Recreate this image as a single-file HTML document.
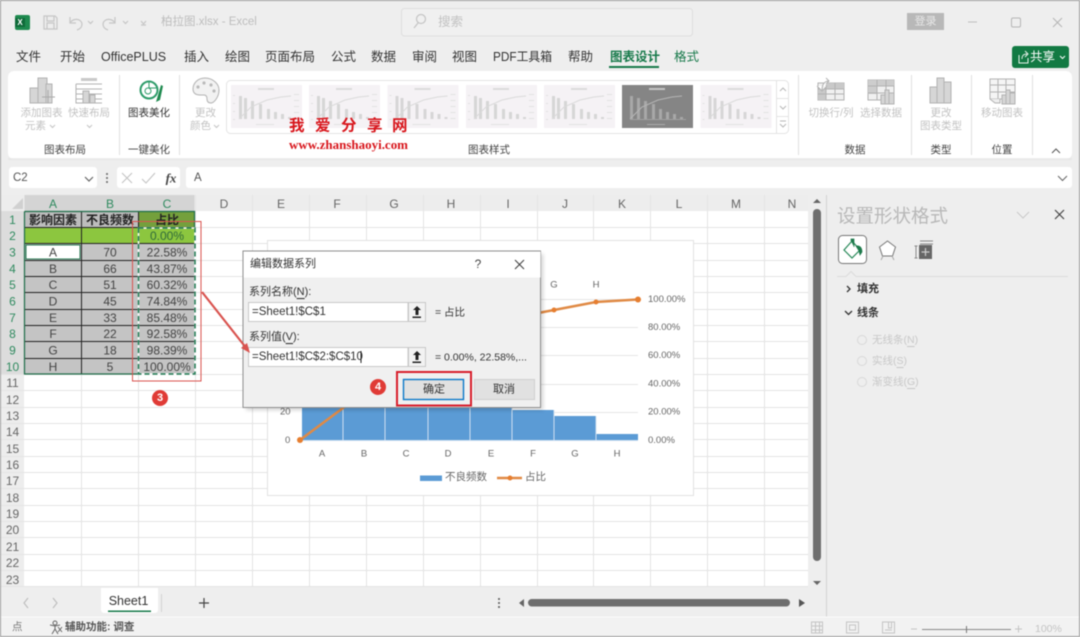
<!DOCTYPE html>
<html lang="zh"><head><meta charset="utf-8"><title>柏拉图.xlsx - Excel</title>
<style>
html,body{margin:0;padding:0;width:1080px;height:637px;overflow:hidden;background:#eee}
svg{display:block;filter:blur(.4px)}
text{font-family:"Liberation Sans","Noto Sans CJK SC",sans-serif;dominant-baseline:central;font-size:12px;fill:#333}
.m{text-anchor:middle}
.tab{font-size:12.5px;fill:#333}
.rb{font-size:10.5px;fill:#c2c2c2}
.lb{font-size:10.5px;fill:#444}
.hd{font-size:12px;fill:#666;text-anchor:middle}
.gh{font-size:12px;fill:#2f8a5f;text-anchor:middle}
.cell{font-size:12px;fill:#444;text-anchor:middle}
.ax{font-size:9.5px;fill:#666}
.dl{font-size:11px;fill:#333}
.ic{fill:#d6d6d6;stroke:#b2b2b2;stroke-width:1}
.no{fill:none;stroke:#b2b2b2;stroke-width:1}
.wm{font-family:"Noto Sans CJK SC",sans-serif;font-size:15.5px;font-weight:bold;fill:#d8161c}
</style></head><body>
<svg width="1080" height="637" viewBox="0 0 1080 637" xmlns="http://www.w3.org/2000/svg">
<defs>
<symbol id="th" viewBox="0 0 71 43">
<rect width="71" height="43" fill="#f5f2f5"/>
<rect x="27" y="3" width="16" height="2" fill="#dcdcdc"/>
<g fill="#d6d6d6"><rect x="8" y="11" width="3" height="23"/><rect x="13" y="13" width="3" height="21"/><rect x="20" y="16" width="3" height="18"/><rect x="28" y="19" width="3" height="15"/><rect x="36" y="24" width="3" height="10"/><rect x="43" y="27" width="3" height="7"/><rect x="50" y="29" width="3" height="5"/><rect x="57" y="32" width="3" height="2"/></g>
<path d="M8 34L20 22 36 15 50 12 60 11" fill="none" stroke="#dadada" stroke-width="1"/>
<g fill="#e2e2e2"><rect x="63" y="9" width="5" height="1"/><rect x="63" y="15" width="5" height="1"/><rect x="63" y="21" width="5" height="1"/><rect x="63" y="27" width="5" height="1"/><rect x="63" y="33" width="5" height="1"/><rect x="2" y="10" width="2" height="1"/><rect x="2" y="18" width="2" height="1"/><rect x="2" y="26" width="2" height="1"/><rect x="2" y="34" width="2" height="1"/><rect x="25" y="39" width="18" height="1"/></g>
</symbol>
<symbol id="thd" viewBox="0 0 71 43">
<rect width="71" height="43" fill="#858585"/>
<rect x="27" y="3" width="16" height="2" fill="#c4c4c4"/>
<g fill="#a8a8a8"><rect x="8" y="11" width="3" height="23"/><rect x="15" y="13" width="3" height="21"/><rect x="22" y="16" width="3" height="18"/><rect x="30" y="19" width="3" height="15"/><rect x="37" y="24" width="3" height="10"/><rect x="44" y="27" width="3" height="7"/><rect x="51" y="29" width="3" height="5"/><rect x="58" y="32" width="3" height="2"/></g>
<path d="M8 34L20 22 36 15 50 12 60 11" fill="none" stroke="#b5b5b5" stroke-width="1"/>
<rect x="8" y="34" width="56" height="1" fill="#a0a0a0"/><rect x="25" y="39" width="18" height="1" fill="#aaa"/>
</symbol>
</defs>

<!-- window -->
<rect width="1080" height="637" fill="#eeeeee"/>

<!-- title bar -->
<rect x="15" y="15" width="15" height="15" rx="2" fill="#1e8a4f"/>
<rect x="15" y="18" width="10" height="9" fill="#0f6b3a"/>
<text x="20" y="22.5" class="m" style="font-size:8px;font-weight:bold;fill:#fff">X</text>
<g fill="none" stroke="#c6c6c6" stroke-width="1.2">
<path d="M44 16h11l2 2v11H44zM47 16v5h7v-5M47 29v-6h7v6"/>
<path d="M70 17v6h6M70 23c3-5 11-5 12 1 0 3-2 5-5 6"/>
<path d="M115 17v6h-6M115 23c-3-5-11-5-12 1 0 3 2 5 5 6"/>
<path d="M88 21l2.500 2.500L93 21M123 21l2.500 2.500L128 21M141 21l2.500 3 2.500-3M141 25h5"/>
</g>
<text x="161" y="22" style="font-size:11.500px;fill:#bdbdbd">柏拉图.xlsx  -  Excel</text>
<rect x="401.500" y="8.500" width="291" height="27.500" rx="3" fill="#f0f0f0" stroke="#dedede"/>
<circle cx="421" cy="19" r="4.500" fill="none" stroke="#c4c4c4" stroke-width="1.200"/>
<path d="M418 23l-4 5" stroke="#c4c4c4" stroke-width="1.200"/>
<text x="438" y="22" style="font-size:12.500px;fill:#c2c2c2">搜索</text>
<rect x="907" y="13" width="37" height="17" fill="#b8b8b8"/>
<text x="925.500" y="21.500" class="m" style="font-size:11px;fill:#e8e8e8">登录</text>
<path d="M968 22h9" stroke="#bdbdbd"/>
<rect x="1011.500" y="18" width="9" height="9" rx="1.500" fill="none" stroke="#b5b5b5"/>
<path d="M1053 18l9 9M1062 18l-9 9" stroke="#b5b5b5"/>

<!-- tabs -->
<g class="tabs">
<text class="tab" x="16" y="57">文件</text>
<text class="tab" x="60" y="57">开始</text>
<text class="tab" x="101" y="57">OfficePLUS</text>
<text class="tab" x="184" y="57">插入</text>
<text class="tab" x="225" y="57">绘图</text>
<text class="tab" x="265" y="57">页面布局</text>
<text class="tab" x="331" y="57">公式</text>
<text class="tab" x="371" y="57">数据</text>
<text class="tab" x="412" y="57">审阅</text>
<text class="tab" x="452" y="57">视图</text>
<text class="tab" x="493" y="57" textLength="59" lengthAdjust="spacingAndGlyphs">PDF工具箱</text>
<text class="tab" x="568" y="57">帮助</text>
<text class="tab" x="610" y="57" style="fill:#17794a;font-weight:bold">图表设计</text>
<text class="tab" x="674" y="57" style="fill:#17794a">格式</text>
</g>
<rect x="609" y="66" width="50" height="2" fill="#17794a"/>
<rect x="1012" y="46" width="57" height="22" rx="3" fill="#127a43"/>
<path d="M1019 55v8h9v-5M1022 59c0-4 2-5 5-5M1025 51l3 3-3 3" fill="none" stroke="#e6f2ea" stroke-width="1"/>
<text x="1030" y="57" style="font-size:12.500px;fill:#fff">共享</text>
<path d="M1060 56l2.500 2.500 2.500-2.500" fill="none" stroke="#fff"/>

<!-- ribbon -->
<rect x="8" y="71" width="1064" height="88" rx="6" fill="#fff"/>
<rect x="8" y="158" width="1064" height="2" fill="#e3e3e3" opacity=".6"/>
<g stroke="#e1e1e1"><path d="M119.500 75v80M179.500 75v80M798.500 75v80M911.500 75v80M971.500 75v80M1032.500 75v80"/></g>

<!-- chart layout icons -->
<rect class="ic" x="30" y="88" width="9" height="15"/><rect class="ic" x="38" y="78" width="9" height="25"/><rect class="ic" x="46" y="84" width="6" height="19"/>
<path d="M48 90v13M42 97h13" stroke="#aaa" fill="none"/>
<rect x="81" y="78" width="16" height="3" fill="#c9c9c9"/>
<path class="no" d="M76 84h26M76 89h26M76 94h26M76 99h26M76 84v19h26"/>
<rect class="ic" x="83" y="91" width="6" height="12"/><rect class="ic" x="90" y="95" width="5" height="8"/>
<text class="rb m" x="41.500" y="113">添加图表</text><text class="rb" x="25" y="126">元素</text>
<path d="M50 125l2.500 2.500 2.500-2.500M87 125l2.500 2.500 2.500-2.500M214 125l2.500 2.500 2.500-2.500" fill="none" stroke="#c4c4c4"/>
<text class="rb m" x="89" y="113">快速布局</text>
<!-- beautify -->
<circle cx="149" cy="90" r="8.500" fill="#fff" stroke="#2f9c6a" stroke-width="2"/>
<circle cx="148" cy="91" r="3" fill="none" stroke="#2f9c6a"/>
<path d="M149 81v7h8" fill="none" stroke="#2f9c6a"/>
<path d="M156 102l5-17 2 1-3 14z" fill="#1e8a4f"/>
<text class="lb m" x="149" y="113" style="fill:#333;font-size:10.500px">图表美化</text>
<!-- palette -->
<path class="no" d="M205 78c8 0 14 6 14 12 0 7-5 13-8 13-3 0-4-2-4-4 0-3-1-4-3-4-4 0-11 1-11-6 0-6 5-11 12-11z" style="fill:#f2f2f2"/>
<g fill="#bbb"><circle cx="198" cy="87" r="1.600"/><circle cx="204" cy="83" r="1.600"/><circle cx="211" cy="85" r="1.600"/><circle cx="214" cy="91" r="1.600"/></g>
<text class="rb m" x="205.500" y="113">更改</text><text class="rb" x="190" y="126">颜色</text>

<!-- gallery -->
<rect x="226.500" y="80.500" width="562" height="53" rx="4" fill="#fff" stroke="#e4e4e4"/>
<use href="#th" x="231" y="85" width="71" height="43"/>
<use href="#th" x="309" y="85" width="71" height="43"/>
<use href="#th" x="387" y="85" width="72" height="43"/>
<use href="#th" x="466" y="85" width="71" height="43"/>
<use href="#th" x="544" y="85" width="71" height="43"/>
<use href="#thd" x="622" y="85" width="71" height="43"/>
<use href="#th" x="700" y="85" width="72" height="43"/>
<path d="M776.500 81v52M776 98.500h13M776 116.500h13" stroke="#e4e4e4"/>
<path d="M780 91l3-3 3 3M780 106l3 3 3-3M780 124l3 3 3-3M780 121h6" fill="none" stroke="#b8b8b8"/>

<!-- watermark -->
<text class="wm" x="289" y="124.500">我</text>
<text class="wm" x="315" y="124.500">爱</text>
<text class="wm" x="341" y="124.500">分</text>
<text class="wm" x="367" y="124.500">享</text>
<text class="wm" x="392" y="124.500">网</text>
<text x="289" y="145" textLength="119" lengthAdjust="spacingAndGlyphs" style="font-family:'Liberation Serif',serif;font-size:12.500px;font-weight:bold;fill:#d8161c">www.zhanshaoyi.com</text>

<!-- data icons -->
<g>
<rect x="818" y="83" width="26" height="17" fill="#f0f0f0" stroke="#b2b2b2"/><rect x="826" y="83" width="18" height="6" fill="#c9c9c9"/><rect x="818" y="89" width="8" height="11" fill="#c9c9c9"/>
<path d="M826 83v17M835 83v17M818 89h26M818 94h26" stroke="#b2b2b2" fill="none"/>
<path d="M817 86l5 5 5-5M822 90c0-6 3-9 7-9M826 78l3 3-3 3" fill="#fff" stroke="#b2b2b2"/>
<rect x="868" y="80" width="26" height="20" fill="#f0f0f0" stroke="#b2b2b2"/><rect x="868" y="80" width="26" height="6" fill="#cdcdcd"/><rect x="868" y="86" width="9" height="8" fill="#cdcdcd"/>
<path d="M877 80v20M886 80v20M868 86h26M868 93h26" stroke="#b2b2b2" fill="none"/>
<rect class="ic" x="881" y="95" width="4" height="9"/><rect class="ic" x="885" y="90" width="4" height="14"/><rect class="ic" x="889" y="93" width="5" height="11"/>
<rect class="ic" x="930" y="87" width="7" height="16"/><rect class="ic" x="937" y="78" width="7" height="25"/><rect class="ic" x="944" y="82" width="7" height="21" />
<rect x="990" y="79" width="25" height="20" fill="#f5f5f5" stroke="#b2b2b2"/>
<path d="M998 79v20M1006 79v20M990 85h25M990 92h25" stroke="#b2b2b2" fill="none"/>
<path d="M990 99l5 4h5v-4" fill="#eee" stroke="#b2b2b2"/>
<rect class="ic" x="1002" y="95" width="4" height="9"/><rect class="ic" x="1006" y="90" width="4" height="14"/><rect class="ic" x="1010" y="93" width="5" height="11"/>
</g>
<text class="rb m" x="831" y="113">切换行/列</text>
<text class="rb m" x="881" y="113">选择数据</text>
<text class="rb m" x="941" y="113">更改</text>
<text class="rb m" x="941" y="126">图表类型</text>
<text class="rb m" x="1002" y="113">移动图表</text>

<text class="lb m" x="65" y="150">图表布局</text>
<text class="lb m" x="149" y="150">一键美化</text>
<text class="lb m" x="489" y="150">图表样式</text>
<text class="lb m" x="855" y="150">数据</text>
<text class="lb m" x="941" y="150">类型</text>
<text class="lb m" x="1002" y="150">位置</text>
<path d="M1052 153l4-4 4 4" fill="none" stroke="#555"/>

<!-- formula bar -->
<rect x="9" y="167" width="88" height="21" rx="3" fill="#fff"/>
<text x="13" y="178" style="font-size:11.500px;fill:#555">C2</text>
<path d="M85 177l4 4 4-4" fill="none" stroke="#666" stroke-width="1.200"/>
<g fill="#666"><circle cx="107" cy="174" r="1"/><circle cx="107" cy="178" r="1"/><circle cx="107" cy="182" r="1"/></g>
<rect x="117" y="167" width="63" height="21" rx="3" fill="#fff"/>
<path d="M122 173l10 10M132 173l-10 10" stroke="#c4c4c4" stroke-width="1.100"/>
<path d="M142 179l4 4 9-10" fill="none" stroke="#c4c4c4" stroke-width="1.100"/>
<text x="171" y="178" class="m" style="font-family:'Liberation Serif',serif;font-style:italic;font-weight:bold;font-size:13px;fill:#444">fx</text>
<rect x="186" y="167" width="886" height="21" rx="3" fill="#fff"/>
<text x="194" y="178" style="font-size:11.500px;fill:#555">A</text>
<path d="M1058 176l4.500 4.500 4.500-4.500" fill="none" stroke="#666"/>

<!-- grid -->
<rect x="0" y="195" width="808" height="392" fill="#fff"/>
<rect x="0" y="195" width="808" height="16" fill="#ededed"/>
<rect x="0" y="211" width="24" height="376" fill="#ededed"/>
<g stroke="#e4e4e4">
<path d="M81.500 195V587M138.500 195V587M195.500 195V587M252.500 195V587M309.500 195V587M366.500 195V587M423.500 195V587M480.500 195V587M537.500 195V587M593.500 195V587M650.500 195V587M707.500 195V587M764.500 195V587"/>
<path d="M0 227.500H808M0 243.500H808M0 260.500H808M0 276.500H808M0 292.500H808M0 309.500H808M0 325.500H808M0 341.500H808M0 358.500H808M0 374.500H808M0 390.500H808M0 407.500H808M0 423.500H808M0 439.500H808M0 456.500H808M0 472.500H808M0 488.500H808M0 505.500H808M0 521.500H808M0 537.500H808M0 554.500H808M0 570.500H808M0 586.500H808"/>
</g>
<rect x="24.500" y="195" width="170" height="16" fill="#d4d4d4"/>
<rect x="0" y="211" width="24" height="163" fill="#dcdcdc"/>
<path d="M12 209l11-11v11z" fill="#d0d0d0"/>
<text class="gh" x="53" y="204">A</text><text class="gh" x="110" y="204">B</text><text class="gh" x="167" y="204">C</text>
<text class="hd" x="224" y="204">D</text><text class="hd" x="281" y="204">E</text><text class="hd" x="337" y="204">F</text><text class="hd" x="394" y="204">G</text><text class="hd" x="451" y="204">H</text><text class="hd" x="508" y="204">I</text><text class="hd" x="565" y="204">J</text><text class="hd" x="622" y="204">K</text><text class="hd" x="679" y="204">L</text><text class="hd" x="736" y="204">M</text><text class="hd" x="792" y="204">N</text>
<text class="gh" x="12.500" y="220">1</text><text class="gh" x="12.500" y="236">2</text><text class="gh" x="12.500" y="252.500">3</text><text class="gh" x="12.500" y="269">4</text><text class="gh" x="12.500" y="285">5</text><text class="gh" x="12.500" y="301.500">6</text><text class="gh" x="12.500" y="318">7</text><text class="gh" x="12.500" y="334">8</text><text class="gh" x="12.500" y="350.500">9</text><text class="gh" x="12.500" y="367">10</text>
<text class="hd" x="12.500" y="383">11</text><text class="hd" x="12.500" y="400">12</text><text class="hd" x="12.500" y="416">13</text><text class="hd" x="12.500" y="432">14</text><text class="hd" x="12.500" y="449">15</text><text class="hd" x="12.500" y="465">16</text><text class="hd" x="12.500" y="481">17</text><text class="hd" x="12.500" y="498">18</text><text class="hd" x="12.500" y="514">19</text><text class="hd" x="12.500" y="530">20</text><text class="hd" x="12.500" y="547">21</text><text class="hd" x="12.500" y="563">22</text><text class="hd" x="12.500" y="580">23</text>

<!-- table -->
<rect x="24" y="211" width="114" height="16" fill="#bdbdbd"/>
<rect x="138" y="211" width="57" height="16" fill="#74a03c"/>
<rect x="24" y="227" width="171" height="17" fill="#8cc63f"/>
<rect x="24" y="244" width="171" height="130" fill="#c4c4c4"/>
<g stroke="#222" fill="none">
<path d="M24 227.500H195M24 243.500H195M24 260.500H195M24 276.500H195M24 292.500H195M24 309.500H195M24 325.500H195M24 341.500H195M24 358.500H195"/>
<path d="M81.500 211V374M138.500 211V374"/>
</g>
<path d="M24.500 211.500H194.500V227M24.500 211.500V374H138M138.500 211.500H194.500" fill="none" stroke="#1f6e4a" stroke-width="1.200"/>
<rect x="26" y="245" width="54" height="14" fill="#fff" stroke="#2a7a55"/>
<rect x="138.500" y="228" width="56.500" height="146" fill="none" stroke="#fff" stroke-width="1.500"/>
<rect x="138.500" y="228" width="56.500" height="146" fill="none" stroke="#1f7a52" stroke-width="1.500" stroke-dasharray="5 3"/>
<text class="m" x="53" y="220" style="font-weight:bold;font-size:12px;fill:#222">影响因素</text>
<text class="m" x="110" y="220" style="font-weight:bold;font-size:12px;fill:#222">不良频数</text>
<text class="m" x="167" y="220" style="font-weight:bold;font-size:12px;fill:#222">占比</text>
<text class="cell" x="167" y="236" style="fill:#2f6a3a">0.00%</text>
<text class="cell" x="53" y="252.500">A</text><text class="cell" x="110" y="252.500">70</text><text class="cell" x="167" y="252.500">22.58%</text>
<text class="cell" x="53" y="269">B</text><text class="cell" x="110" y="269">66</text><text class="cell" x="167" y="269">43.87%</text>
<text class="cell" x="53" y="285">C</text><text class="cell" x="110" y="285">51</text><text class="cell" x="167" y="285">60.32%</text>
<text class="cell" x="53" y="301.500">D</text><text class="cell" x="110" y="301.500">45</text><text class="cell" x="167" y="301.500">74.84%</text>
<text class="cell" x="53" y="318">E</text><text class="cell" x="110" y="318">33</text><text class="cell" x="167" y="318">85.48%</text>
<text class="cell" x="53" y="334">F</text><text class="cell" x="110" y="334">22</text><text class="cell" x="167" y="334">92.58%</text>
<text class="cell" x="53" y="350.500">G</text><text class="cell" x="110" y="350.500">18</text><text class="cell" x="167" y="350.500">98.39%</text>
<text class="cell" x="53" y="367">H</text><text class="cell" x="110" y="367">5</text><text class="cell" x="167" y="367">100.00%</text>

<!-- chart -->
<rect x="267.500" y="240.500" width="426" height="255" fill="#fff" stroke="#e2e2e2"/>
<g stroke="#e6e6e6"><path d="M302 299.500H638M302 327.500H638M302 355.500H638M302 384.500H638M302 412.500H638"/></g>
<path d="M302 342h41v98h-41zM343 345h42v95h-42zM385 369h43v71h-43zM428 377h42v63h-42zM470 394h42v46h-42zM512 410h42v30h-42zM554 416h42v24h-42zM596 434h42v6h-42z" fill="#5b9bd5"/>
<path d="M343 342v98M385 345v95M428 369v71M470 377v63M512 394v46M554 410v30M596 416v24" stroke="#cfe0f1"/>
<path d="M302 440.500H638" stroke="#cfe0f1"/>
<path d="M300 440L343 408 385 377 428 352 470 331 512 318 554 310 596 302 638 299.500" fill="none" stroke="#e08a45" stroke-width="2.500"/>
<g fill="#e67e30"><circle cx="300" cy="440" r="3"/><circle cx="554" cy="310" r="2.500"/><circle cx="596" cy="302" r="2.500"/><circle cx="638" cy="299.500" r="3"/></g>
<text class="ax m" x="554" y="285">G</text><text class="ax m" x="596" y="285">H</text>
<text class="ax" x="648" y="299.500">100.00%</text><text class="ax" x="648" y="327.500">80.00%</text><text class="ax" x="648" y="355.500">60.00%</text><text class="ax" x="648" y="384">40.00%</text><text class="ax" x="648" y="412">20.00%</text><text class="ax" x="648" y="440.500">0.00%</text>
<text class="ax" x="280" y="412">20</text><text class="ax" x="285" y="440.500">0</text>
<text class="ax m" x="322" y="454">A</text><text class="ax m" x="364" y="454">B</text><text class="ax m" x="406" y="454">C</text><text class="ax m" x="448" y="454">D</text><text class="ax m" x="491" y="454">E</text><text class="ax m" x="533" y="454">F</text><text class="ax m" x="575" y="454">G</text><text class="ax m" x="617" y="454">H</text>
<rect x="420" y="475.500" width="22" height="5.500" fill="#5b9bd5"/>
<text x="445" y="477" style="font-size:10.500px;fill:#666">不良频数</text>
<path d="M497 478h25" stroke="#e08a45" stroke-width="2.500"/><circle cx="510" cy="478" r="2.500" fill="#e67e30"/>
<text x="525" y="477" style="font-size:10.500px;fill:#666">占比</text>

<!-- annotation 3 -->
<rect x="132.500" y="221.500" width="68.500" height="159.500" fill="none" stroke="#d9534f"/>
<circle cx="160" cy="398" r="8" fill="#e03b36"/>
<text x="160" y="398" class="m" style="font-size:11px;font-weight:bold;fill:#fff">3</text>

<!-- dialog -->
<rect x="246" y="254" width="297" height="156" fill="#000" opacity=".18" style="filter:blur(2px)"/>
<rect x="243" y="251" width="297.500" height="156.500" fill="#f0f0f0" stroke="#8e8e8e"/>
<rect x="243.500" y="251.500" width="297" height="26" fill="#fff"/>
<text x="250" y="264" class="dl">编辑数据系列</text>
<text x="478" y="264" class="m" style="font-size:12px;fill:#444">?</text>
<path d="M515 260l9 9M524 260l-9 9" stroke="#444" stroke-width="1.100"/>
<text x="249" y="292" class="dl">系列名称(<tspan text-decoration="underline">N</tspan>):</text>
<rect x="248.500" y="302.500" width="159.500" height="19" fill="#fff" stroke="#c8c8c8"/>
<rect x="408.500" y="302.500" width="17" height="19" fill="#f2f2f2" stroke="#c8c8c8"/>
<path d="M417 306l-4 4h2.500v5h3v-5h2.500zM412.500 316.500h8.500v1.500h-8.500z" fill="#222"/>
<text x="252" y="312" class="dl" style="font-size:11.500px">=Sheet1!$C$1</text>
<text x="435" y="312.500" class="dl" style="font-size:10.500px">=  占比</text>
<text x="249" y="337" class="dl">系列值(<tspan text-decoration="underline">V</tspan>):</text>
<rect x="248.500" y="347.500" width="159.500" height="19" fill="#fff" stroke="#c8c8c8"/>
<rect x="408.500" y="347.500" width="17" height="19" fill="#f2f2f2" stroke="#c8c8c8"/>
<path d="M417 351l-4 4h2.500v5h3v-5h2.500zM412.500 361.500h8.500v1.500h-8.500z" fill="#222"/>
<text x="252" y="357" class="dl" style="font-size:11.500px">=Sheet1!$C$2:$C$10</text>
<path d="M361 351v12" stroke="#222"/>
<text x="435" y="357.500" class="dl" style="font-size:10.500px">=  0.00%, 22.58%,...</text>
<circle cx="378" cy="387" r="8" fill="#e03b36"/>
<text x="378" y="387" class="m" style="font-size:11px;font-weight:bold;fill:#fff">4</text>
<rect x="397" y="372" width="74" height="33.500" fill="none" stroke="#d81e2c" stroke-width="2"/>
<rect x="403.500" y="379.500" width="60" height="20" fill="#e1e1e1" stroke="#0a78c8" stroke-width="1.400"/>
<text x="434" y="389.500" class="m dl">确定</text>
<rect x="474.500" y="379.500" width="60" height="20" fill="#e1e1e1" stroke="#cfcfcf"/>
<text x="504" y="389.500" class="m dl">取消</text>

<!-- arrow over dialog -->
<path d="M202 292L247 349" stroke="#d9534f" stroke-width="2.200"/>
<path d="M250 353l-9-5 6-5z" fill="#d9534f"/>

<!-- scrollbars -->
<path d="M817 199l4 4h-8z" fill="#666"/>
<rect x="813" y="209" width="8" height="352" rx="4" fill="#6e6e6e"/>
<path d="M813 581h8l-4 4z" fill="#666"/>
<path d="M826.500 195V617" stroke="#d2d2d2"/>
<!-- task pane -->
<text x="837" y="216" style="font-size:18.500px;fill:#b8b8b8">设置形状格式</text>
<path d="M1017 212l6 6 6-6" fill="none" stroke="#cacaca" stroke-width="1.100"/>
<path d="M1055 210l9 9M1064 210l-9 9" stroke="#444" stroke-width="1.200"/>
<rect x="838.500" y="235.500" width="28" height="28" rx="4" fill="#fff" stroke="#777"/>
<path d="M852 241l-8 9 8 8 8-8z" fill="none" stroke="#2a8a5a" stroke-width="1.200"/>
<path d="M851 241v-2h3v8M856 246c4-1 6 2 6 6l-2 3-1-4z" fill="#1e7a4c" stroke="#1e7a4c" stroke-width=".7"/>
<path d="M887.500 241l8 6-3 9h-10l-3-9z" fill="#fff" stroke="#777"/>
<path d="M883 256l-2 4M892 256l2 4" stroke="#aaa"/>
<rect x="919" y="245" width="13" height="14" fill="#666"/>
<path d="M925.500 248v8M921.500 252h8" stroke="#ccc" stroke-width="1.200"/>
<path d="M920 241h13M920 244h13M916 246v12M914.500 246h3M914.500 258h3" stroke="#888"/>
<path d="M837 276.500H846l5-5 5 5H1068" fill="none" stroke="#dcdcdc"/>
<path d="M847 286l3 3-3 3" fill="none" stroke="#333" stroke-width="1.300"/>
<text x="857" y="289" style="font-size:11px;font-weight:bold;fill:#333">填充</text>
<path d="M845 311l3.500 3.500 3.500-3.500" fill="none" stroke="#333" stroke-width="1.300"/>
<text x="857" y="313" style="font-size:11px;font-weight:bold;fill:#333">线条</text>
<g fill="none" stroke="#d8d8d8"><circle cx="862" cy="340" r="4.500"/><circle cx="862" cy="361" r="4.500"/><circle cx="862" cy="382" r="4.500"/></g>
<text x="872" y="340" style="font-size:10.500px;fill:#c8c8c8">无线条(<tspan text-decoration="underline">N</tspan>)</text>
<text x="872" y="361" style="font-size:10.500px;fill:#c8c8c8">实线(<tspan text-decoration="underline">S</tspan>)</text>
<text x="872" y="382" style="font-size:10.500px;fill:#c8c8c8">渐变线(<tspan text-decoration="underline">G</tspan>)</text>

<!-- sheet bar -->
<path d="M28 598l-4 5 4 5M53 598l4 5-4 5" fill="none" stroke="#bdbdbd" stroke-width="1.100"/>
<path d="M101 588h57v22a3 3 0 0 1-3 3h-51a3 3 0 0 1-3-3z" fill="#fff"/>
<text x="128.500" y="601" class="m" style="font-size:12.500px;fill:#333">Sheet1</text>
<rect x="108" y="610.500" width="43" height="1.500" fill="#17794a"/>
<path d="M161.500 594v18" stroke="#d2d2d2"/>
<path d="M204 598v10M199 603h10" stroke="#444" stroke-width="1.200"/>
<g fill="#555"><circle cx="499" cy="599" r="1"/><circle cx="499" cy="603" r="1"/><circle cx="499" cy="607" r="1"/></g>
<path d="M524 599v8l-5-4z" fill="#666"/>
<rect x="528" y="599" width="262" height="7.500" rx="3.700" fill="#6e6e6e"/>
<path d="M799 599v8l6-4z" fill="#555"/>

<!-- status bar -->
<rect x="0" y="617" width="1080" height="19" fill="#f2f2f2"/>
<path d="M0 617H1080" stroke="#fbfbfb"/>
<text x="12" y="627" style="font-size:10.500px;fill:#777">点</text>
<circle cx="55" cy="623" r="2" fill="none" stroke="#666"/>
<path d="M50 625l5 1 5-1M55 626v3l-3 5M55 629l3 5M58 627l4 5M62 627l-4 5" fill="none" stroke="#666"/>
<text x="65" y="627" style="font-size:10.500px;font-weight:bold;fill:#555">辅助功能: 调查</text>
<g fill="none" stroke="#c4c4c4">
<path d="M811.500 622h11v11h-11zM815.500 622v11M819.500 622v11M811.500 626h11M811.500 630h11"/>
<path d="M846.500 622h12v11h-12zM849.500 625h6v5h-6z"/>
<path d="M882.500 622h12v11h-12zM888.500 622v6h3v-6M885 630h7"/>
</g>
<path d="M911 629h6M1015 629h7M1018.500 625.500v7" stroke="#c4c4c4"/>
<path d="M922 629.500H1011" stroke="#8a8a8a"/><path d="M966.500 626v7" stroke="#777"/>
<text x="1035" y="629" style="font-size:10.500px;fill:#c4c4c4">100%</text>

<!-- frame -->
<rect x=".5" y=".5" width="1079" height="636" fill="none" stroke="#9c9c9c"/>
</svg>
</body></html>
